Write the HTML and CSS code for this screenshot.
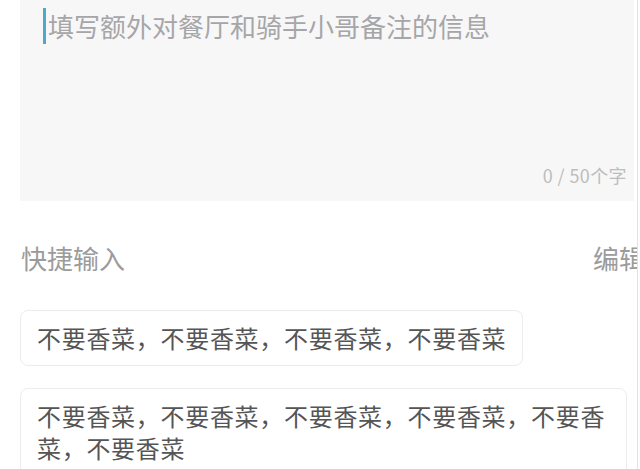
FILE: index.html
```html
<!DOCTYPE html>
<html lang="zh">
<head>
<meta charset="utf-8">
<link rel="stylesheet" href="styles.css">
</head>
<body>
<div class="page">
  <div class="note">
    <div class="input">
      <span class="caret"></span>
      <span class="placeholder">填写额外对餐厅和骑手小哥备注的信息</span>
    </div>
    <div class="counter">0 / 50个字</div>
  </div>
  <div class="quick">
    <span class="quick-title">快捷输入</span>
    <span class="quick-edit">编辑</span>
  </div>
  <div class="chips">
    <div class="chip">不要香菜，不要香菜，不要香菜，不要香菜</div>
    <div class="chip">不要香菜，不要香菜，不要香菜，不要香菜，不要香菜，不要香菜</div>
  </div>
</div>
</body>
</html>
```

FILE: styles.css
```css
html, body {
  margin: 0;
  padding: 0;
  background: #ffffff;
}
body {
  width: 640px;
  height: 469px;
  overflow: hidden;
  font-family: "Noto Sans CJK SC", "Noto Sans", sans-serif;
}
.page {
  width: 637px;
  height: 469px;
  overflow: hidden;
  border-right: 1px solid #e2e2e2;
}
.note {
  margin-left: 20px;
  width: 614px;
  height: 201px;
  box-sizing: border-box;
  background: #f7f7f8;
  padding: 8px 7px 15px 23px;
  display: flex;
  flex-direction: column;
  justify-content: space-between;
}
.input {
  display: flex;
  align-items: center;
}
.caret {
  width: 3px;
  height: 36px;
  background: #4ea9c9;
}
.placeholder {
  margin-left: 2px;
  font-size: 26px;
  line-height: 36px;
  color: #a6a6a8;
  white-space: nowrap;
}
.counter {
  align-self: flex-end;
  font-size: 18px;
  letter-spacing: 0.4px;
  line-height: 22px;
  color: #bdbdbd;
}
.quick {
  margin-top: 39px;
  margin-left: 21px;
  width: 624px;
  display: flex;
  justify-content: space-between;
  font-size: 26px;
  line-height: 36px;
  color: #9b9b9b;
}
.chips {
  margin-top: 34px;
  margin-left: 20px;
  width: 607px;
  display: flex;
  flex-direction: column;
  align-items: flex-start;
  gap: 22px;
}
.chip {
  border: 1px solid #ececec;
  border-radius: 8px;
  padding: 11px 16px;
  font-size: 24px;
  letter-spacing: 0.7px;
  line-height: 32px;
  color: #555555;
}
```
